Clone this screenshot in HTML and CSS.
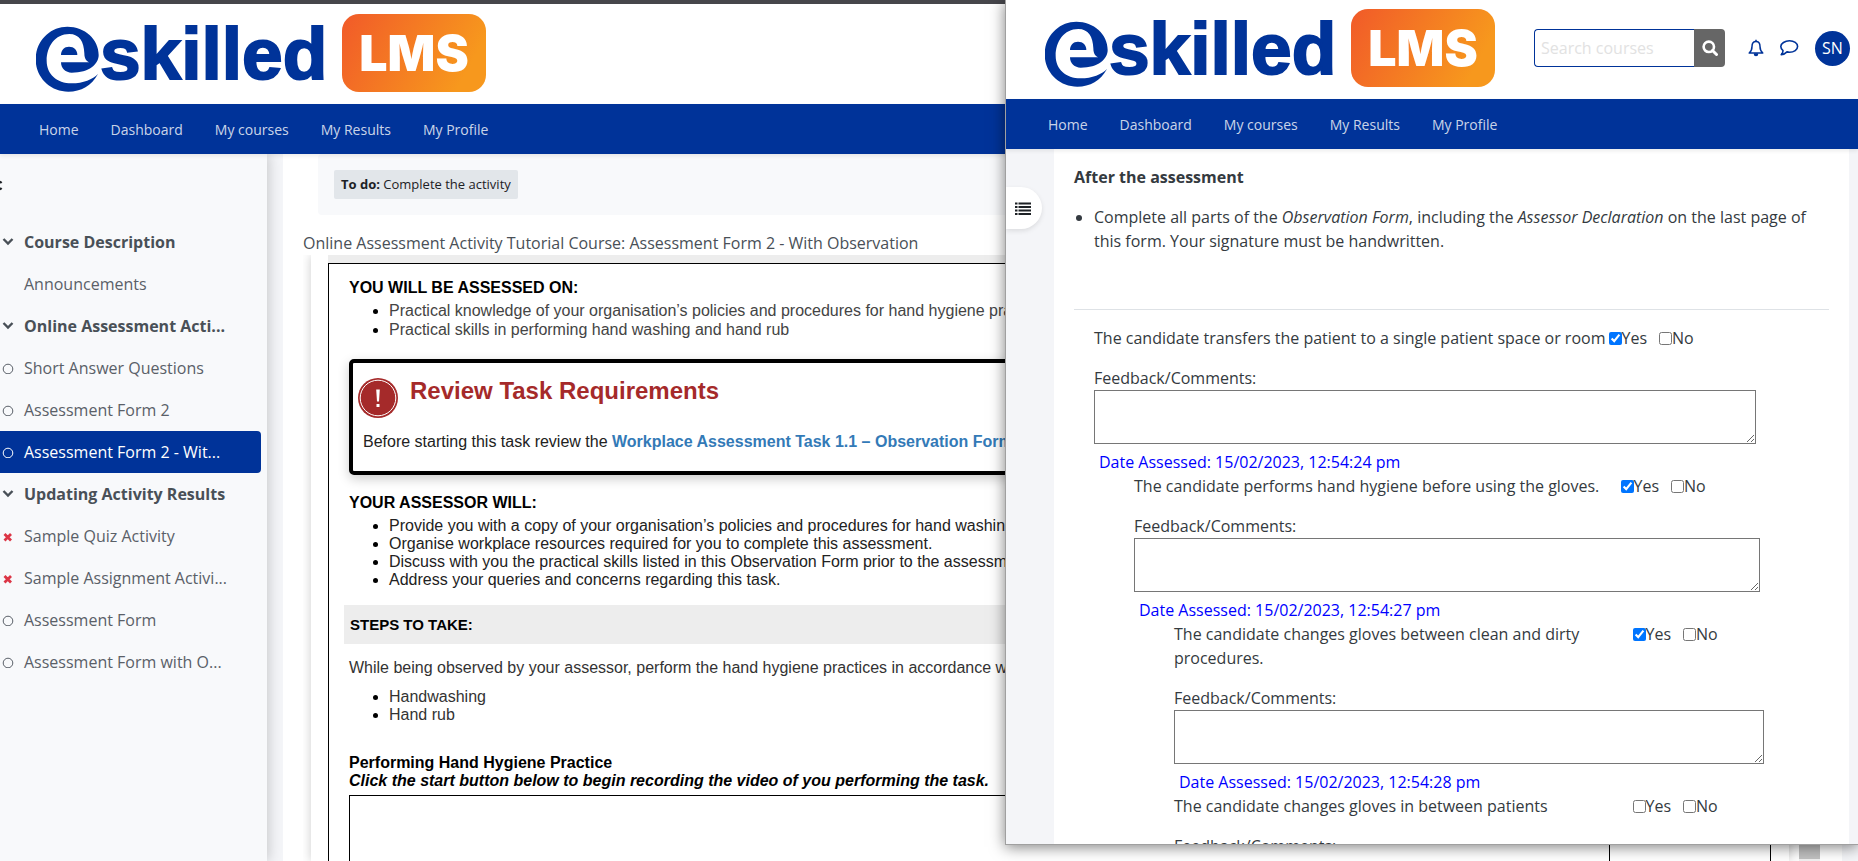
FILE: index.html
```html
<!DOCTYPE html>
<html lang="en">
<head>
<meta charset="utf-8">
<title>eSkilled LMS</title>
<link rel="stylesheet" href="styles.css">
</head>
<body>
<svg class="defs" aria-hidden="true">
  <defs>
    <linearGradient id="orange" x1="0" y1="0" x2="1" y2="0.3">
      <stop offset="0" stop-color="#f15a29"/>
      <stop offset="1" stop-color="#f7981d"/>
    </linearGradient>
    <symbol id="logo" viewBox="0 0 452 80">
      <g transform="translate(-36 -13) scale(0.33333)" fill="#003399">
        <path d="M294 222C275 257 243 275 205 275C150 275 107 232 107 178C107 123 150 80 202 80C255 80 296 118 296 165C296 192 268 218 215 218C197 218 183 205 183 187L268 187C262 185 253 180 253 160C252 125 238 102 208 102C165 102 140 140 140 182C140 222 170 250 215 250C250 250 278 238 294 222Z"/>
        <path d="M183 165C183 150 193 140 207 140C222 140 232 150 232 165Z"/>
      </g>
      <text class="logo-word" x="64" y="66">skilled</text>
      <rect x="306" y="1" width="144" height="78" rx="17" fill="url(#orange)"/>
      <text class="logo-badge" x="378" y="58" text-anchor="middle">LMS</text>
    </symbol>
    <symbol id="chevron" viewBox="0 0 12 12"><path d="M1.500 3L6 7.500L10.500 3" fill="none" stroke="currentColor" stroke-width="2.400"/></symbol>
    <symbol id="circle" viewBox="0 0 12 12"><circle cx="6" cy="7" r="4.800" fill="none" stroke="currentColor"/></symbol>
    <symbol id="cross" viewBox="0 0 12 12"><path d="M2.500 4L9 10.500M9 4L2.500 10.500" stroke="#dc3545" stroke-width="2.800"/></symbol>
  </defs>
</svg>

<div class="page">
  <header class="brand">
    <svg class="logo" role="img" aria-label="eSkilled LMS"><use href="#logo"/></svg>
  </header>
  <nav class="menu">
    <a href="#">Home</a><a href="#">Dashboard</a><a href="#">My courses</a><a href="#">My Results</a><a href="#">My Profile</a>
  </nav>
  <div class="columns">
    <aside class="sidebar">
      <button class="close" aria-label="Close course index"><svg width="4" height="12" viewBox="0 0 4 12"><path d="M0 4L1.500 2.500M0 9L1.500 10.500" stroke="#1d2125" stroke-width="2.400"/></svg></button>
      <nav class="index">
        <a class="section" href="#"><svg><use href="#chevron"/></svg><span>Course Description</span></a>
        <a href="#"><svg></svg><span>Announcements</span></a>
        <a class="section" href="#"><svg><use href="#chevron"/></svg><span>Online Assessment Acti...</span></a>
        <a href="#"><svg><use href="#circle"/></svg><span>Short Answer Questions</span></a>
        <a href="#"><svg><use href="#circle"/></svg><span>Assessment Form 2</span></a>
        <a class="current" href="#"><svg><use href="#circle"/></svg><span>Assessment Form 2 - Wit...</span></a>
        <a class="section" href="#"><svg><use href="#chevron"/></svg><span>Updating Activity Results</span></a>
        <a href="#"><svg><use href="#cross"/></svg><span>Sample Quiz Activity</span></a>
        <a href="#"><svg><use href="#cross"/></svg><span>Sample Assignment Activi...</span></a>
        <a href="#"><svg><use href="#circle"/></svg><span>Assessment Form</span></a>
        <a href="#"><svg><use href="#circle"/></svg><span>Assessment Form with O...</span></a>
      </nav>
    </aside>
    <main class="activity">
      <div class="completion"><span class="chip"><strong>To do:</strong> Complete the activity</span></div>
      <p class="title">Online Assessment Activity Tutorial Course: Assessment Form 2 - With Observation</p>
      <div class="viewer">
        <div class="paper">
          <article class="sheet">
            <h2>YOU WILL BE ASSESSED ON:</h2>
            <ul class="assessed">
              <li>Practical knowledge of your organisation’s policies and procedures for hand hygiene practices</li>
              <li>Practical skills in performing hand washing and hand rub</li>
            </ul>
            <section class="review">
              <svg class="alert" viewBox="0 0 40 40"><circle cx="20" cy="20" r="20" fill="#a52a2a"/><circle cx="20" cy="20" r="17.800" fill="none" stroke="#fff" stroke-width="1"/><path d="M18.200 11.500h3.600l-.8 12h-2zM18.500 26h3v3h-3z" fill="#fff"/></svg>
              <h3>Review Task Requirements</h3>
              <p>Before starting this task review the <a href="#">Workplace Assessment Task 1.1 – Observation Form</a></p>
            </section>
            <h2>YOUR ASSESSOR WILL:</h2>
            <ul class="duties">
              <li>Provide you with a copy of your organisation’s policies and procedures for hand washing</li>
              <li>Organise workplace resources required for you to complete this assessment.</li>
              <li>Discuss with you the practical skills listed in this Observation Form prior to the assessment</li>
              <li>Address your queries and concerns regarding this task.</li>
            </ul>
            <h2 class="band">STEPS TO TAKE:</h2>
            <p class="intro">While being observed by your assessor, perform the hand hygiene practices in accordance with</p>
            <ul class="practices">
              <li>Handwashing</li>
              <li>Hand rub</li>
            </ul>
            <h2>Performing Hand Hygiene Practice</h2>
            <p class="hint">Click the start button below to begin recording the video of you performing the task.</p>
            <div class="recorder"></div>
          </article>
        </div>
        <div class="track"><div class="thumb"></div></div>
      </div>
    </main>
  </div>
</div>

<div class="window">
  <header class="brand">
    <svg class="logo" role="img" aria-label="eSkilled LMS"><use href="#logo"/></svg>
    <div class="tools">
      <form class="search">
        <input type="text" placeholder="Search courses" aria-label="Search courses">
        <button type="button" aria-label="Search"><svg width="16" height="16" viewBox="0 0 16 16"><circle cx="6.800" cy="6.800" r="5.200" fill="none" stroke="#fff" stroke-width="2.600"/><path d="M10.500 10.500L14.500 14.500" stroke="#fff" stroke-width="3" stroke-linecap="round"/></svg></button>
      </form>
      <button class="icon" aria-label="Notifications"><svg width="16" height="18" viewBox="0 0 16 18" fill="none" stroke="#003399" stroke-width="1.500" stroke-linejoin="round"><path d="M8 2.500C5 2.500 4 5 4 7.500C4 11 3 12.500 1.200 14H14.800C13 12.500 12 11 12 7.500C12 5 11 2.500 8 2.500Z"/><path d="M8 2.500V.8M6.500 15a1.500 1.500 0 0 0 3 0z" fill="#003399"/></svg></button>
      <button class="icon" aria-label="Messages"><svg width="20" height="18" viewBox="0 0 20 18" fill="none" stroke="#003399" stroke-width="1.600" stroke-linejoin="round"><path d="M10.500 1.800C15 1.800 18.600 4.300 18.600 7.500S15 13.200 10.500 13.200C9.600 13.200 8.800 13.100 8 12.900C6.300 14.700 4.500 15.400 2.200 15.700C3.300 14.600 4 13.400 4 11.700C2.800 10.600 1.800 9.200 1.800 7.500C1.800 4.300 6 1.800 10.500 1.800Z"/></svg></button>
      <button class="avatar">SN</button>
    </div>
  </header>
  <nav class="menu">
    <a href="#">Home</a><a href="#">Dashboard</a><a href="#">My courses</a><a href="#">My Results</a><a href="#">My Profile</a>
  </nav>
  <div class="window-body">
    <button class="drawer" aria-label="Open course index"><svg width="16" height="13" viewBox="0 0 16 13"><path d="M0 1.500H2.500M3.500 1.500H16M0 5H2.500M3.500 5H16M0 8.500H2.500M3.500 8.500H16M0 12H2.500M3.500 12H16" stroke="#1d2125" stroke-width="2.200"/></svg></button>
    <main class="form">
      <h2>After the assessment</h2>
      <ul>
        <li>Complete all parts of the <em>Observation Form</em>, including the <em>Assessor Declaration</em> on the last page of this form. Your signature must be handwritten.</li>
      </ul>
      <hr>
      <div class="level">
        <div class="question"><span>The candidate transfers the patient to a single patient space or room</span><span class="answers"><label><input type="checkbox" checked>Yes</label><label><input type="checkbox">No</label></span></div>
        <label class="comment" for="c1">Feedback/Comments:</label>
        <textarea id="c1"></textarea>
        <p class="date">Date Assessed: 15/02/2023, 12:54:24 pm</p>
        <div class="level">
          <div class="question"><span>The candidate performs hand hygiene before using the gloves.</span><span class="answers"><label><input type="checkbox" checked>Yes</label><label><input type="checkbox">No</label></span></div>
          <label class="comment" for="c2">Feedback/Comments:</label>
          <textarea id="c2"></textarea>
          <p class="date">Date Assessed: 15/02/2023, 12:54:27 pm</p>
          <div class="level">
            <div class="question"><span>The candidate changes gloves between clean and dirty procedures.</span><span class="answers"><label><input type="checkbox" checked>Yes</label><label><input type="checkbox">No</label></span></div>
            <label class="comment" for="c3">Feedback/Comments:</label>
            <textarea id="c3"></textarea>
            <p class="date">Date Assessed: 15/02/2023, 12:54:28 pm</p>
            <div class="question"><span>The candidate changes gloves in between patients</span><span class="answers"><label><input type="checkbox">Yes</label><label><input type="checkbox">No</label></span></div>
            <label class="comment" for="c4">Feedback/Comments:</label>
            <textarea id="c4"></textarea>
          </div>
        </div>
      </div>
    </main>
  </div>
</div>
</body>
</html>
```

FILE: styles.css
```css
* { box-sizing: border-box; }
body, h2, h3, p, ul { margin: 0; padding: 0; }
body {
  height: 100vh;
  overflow: hidden;
  position: relative;
  font: 16px/24px "Open Sans", "Noto Sans", sans-serif;
  color: #343a40;
  background: #fff;
}
a { text-decoration: none; color: inherit; }
button { border: 0; padding: 0; background: none; font: inherit; }
.defs { position: absolute; width: 0; height: 0; }

/* Shared header */
.brand { display: flex; height: 100px; padding: 9px 8px 0 36px; background: #fff; }
.logo { flex: none; width: 452px; height: 80px; }
.logo-word { font: bold 73px "Liberation Sans", Arial, sans-serif; fill: #003399; stroke: #003399; stroke-width: 2px; }
.logo-badge { font: 900 50px Inter, sans-serif; fill: #fff; }
.menu {
  display: flex;
  align-items: center;
  gap: 32px;
  height: 50px;
  padding: 2px 0 0 39px;
  background: #003399;
  box-shadow: 0 2px 4px rgba(0, 0, 0, .08);
  position: relative;
  font-size: 14px;
  color: rgba(255, 255, 255, .8);
  white-space: nowrap;
}

/* Main page */
.page { height: 100%; display: flex; flex-direction: column; border-top: 4px solid #46464b; }
.page > .brand, .page > .menu { flex: none; }
.columns { flex: 1; min-height: 0; display: flex; gap: 16px; padding-right: 16px; background: #f4f5f8; }
.sidebar { flex: none; width: 267px; padding: 25px 6px 0 0; background: #f8f9fb; box-shadow: 2px 0 12px rgba(0, 0, 0, .18); }
.close { display: block; height: 12px; margin-bottom: 30px; }
.close svg { display: block; }
.index a { display: flex; align-items: center; gap: 10px; height: 42px; padding-left: 2px; border-radius: 0 4px 4px 0; color: #5a6068; white-space: nowrap; }
.index svg { flex: none; width: 12px; height: 12px; }
.index .section { font-weight: bold; color: #495057; }
.index .current { background: #003399; color: #fff; }

.activity { flex: 1; min-width: 0; display: flex; flex-direction: column; padding-left: 20px; background: #fff; }
.completion { margin: 0 20px 16px 15px; padding: 16px; background: #f8f9fb; border-radius: 4px; }
.chip { display: block; width: fit-content; padding: 4px 7px; border-radius: 2px; background: #e2e6ea; font-size: 13px; line-height: 21px; color: #1d2125; }
.title { flex: none; color: #495057; white-space: nowrap; }
.viewer { flex: 1; min-height: 0; display: flex; gap: 10px; margin-right: 22px; padding-left: 8px; overflow: hidden; }
.paper { flex: 1; min-width: 0; padding: 0 18px 0 17px; box-shadow: 0 0 10px rgba(0, 0, 0, .2); }
.track { flex: none; width: 21px; background: #f1f1f1; }
.thumb { height: calc(100% - 2px); background: #c1c1c1; }
.sheet {
  display: flow-root;
  height: 1000px;
  margin-top: 8px;
  border: 1px solid #000;
  box-shadow: 0 -8px 0 #ededed;
  padding: 15px 20px 0;
  font: 16px/18px "Liberation Sans", Arial, sans-serif;
  color: #333;
}
.sheet h2 { font-size: 16px; line-height: 18px; color: #000; }
.sheet ul { padding-left: 40px; }
.sheet li::marker { color: #000; }
.sheet .assessed { margin: 4px 0 20px; line-height: 19px; color: #444; }
.review { display: grid; grid-template-columns: 46px 1fr; row-gap: 27px; margin-bottom: 19px; padding: 14px 5px 20px; border: 4px solid #000; border-radius: 5px; box-shadow: 0 4px 12px rgba(0, 0, 0, .2); }
.alert { width: 40px; height: 40px; margin: 1px 0 -12px; }
.review h3 { padding-left: 6px; font-size: 24px; line-height: 28px; color: #a52a2a; }
.review p { grid-column: 1 / 3; padding-left: 5px; color: #222; }
.review a { font-weight: bold; color: #337ab7; }
.sheet .duties { margin: 5px 0 16px; color: #222; }
.sheet .band { margin: 0 -5px 15px; padding: 0 6px; background: #ededed; font-size: 15px; line-height: 39px; }
.sheet .practices { margin: 11px 0 30px; }
.hint { font-weight: bold; font-style: italic; color: #000; }
.recorder { width: 90%; height: 400px; margin-top: 5px; border: 1px solid #000; }

/* Overlapping browser window */
.window {
  position: absolute;
  top: 0;
  bottom: 16px;
  left: 1005px;
  right: 0;
  display: flex;
  flex-direction: column;
  overflow: hidden;
  background: #f4f5f8;
  border: solid #a0a0a0;
  border-width: 0 0 1px 1px;
  box-shadow: 0 2px 14px rgba(0, 0, 0, .5);
}
.window .brand { flex: none; height: 99px; padding: 8px 8px 0 39px; justify-content: space-between; }
.window .menu { flex: none; padding-left: 42px; }
.tools { display: flex; align-items: center; height: 80px; }
.search { display: flex; height: 38px; margin-right: 14px; }
.search input { width: 160px; padding: 0 6px; border: 1px solid #003399; border-right: 0; border-radius: 4px 0 0 4px; font: inherit; }
.search input::placeholder { color: #e2e2e2; }
.search button { width: 31px; border-radius: 0 4px 4px 0; background: #666; display: grid; place-items: center; }
.icon { width: 33px; height: 38px; display: grid; place-items: center; }
.avatar { width: 35px; height: 35px; margin-left: 10px; border-radius: 50%; background: #003399; color: #fff; text-align: center; }

.window-body { flex: 1; min-height: 0; display: flex; align-items: flex-start; padding-right: 9px; }
.drawer { flex: none; width: 36px; height: 42px; margin: 38px 12px 0 0; padding-left: 9px; border-radius: 0 21px 21px 0; background: #fff; box-shadow: 0 2px 5px rgba(0, 0, 0, .1); display: flex; align-items: center; }
.form { flex: 1; min-width: 0; padding: 16px 20px; background: #fff; }
.form h2 { font-size: 16px; line-height: 24px; margin-bottom: 16px; }
.form ul { padding-left: 20px; }
.form hr { margin: 56px 0 16px; border: 0; border-top: 1px solid #dee2e6; }
.form > .level { margin-left: 20px; }
.level .level { margin-left: 40px; }
.question { display: grid; grid-template-columns: 70% 30%; margin-bottom: 16px; }
.answers { display: flex; align-items: flex-start; gap: 12px; }
.answers label { display: flex; align-items: center; }
.answers input { width: 13px; height: 13px; margin: 0; accent-color: #0075ff; }
.comment { display: block; }
.form textarea { display: block; width: 90%; height: 54px; border: 1px solid #767676; }
.date { margin-top: 6px; padding-left: 5px; color: #0000ff; }
```
